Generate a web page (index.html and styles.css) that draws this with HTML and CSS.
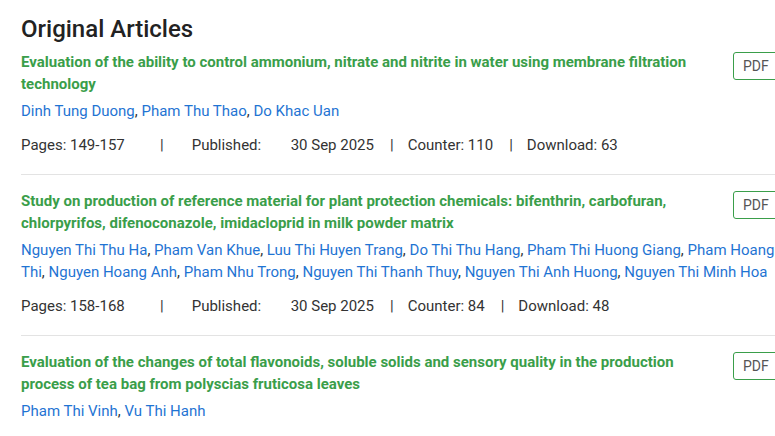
FILE: index.html
```html
<!DOCTYPE html>
<html lang="en">
<head>
<meta charset="utf-8">
<title>Original Articles</title>
<link rel="stylesheet" href="styles.css">
</head>
<body>
<main class="section">
  <h2 class="section-title">Original Articles</h2>

  <article class="article">
    <div class="article-head">
      <a class="article-title" href="#">Evaluation of the ability to control ammonium, nitrate and nitrite in water using membrane filtration technology</a>
      <a class="pdf-btn" href="#">PDF</a>
    </div>
    <div class="authors"><a href="#">Dinh Tung Duong</a>, <a href="#">Pham Thu Thao</a>, <a href="#">Do Khac Uan</a></div>
    <div class="meta">
      <span class="pages">Pages: 149-157</span>
      <span class="sep sep-first">|</span>
      <span class="pub-label">Published:</span>
      <span class="date">30 Sep 2025</span>
      <span class="sep">|</span>
      <span class="counter">Counter: 110</span>
      <span class="sep">|</span>
      <span class="download">Download: 63</span>
    </div>
  </article>

  <article class="article">
    <div class="article-head">
      <a class="article-title" href="#">Study on production of reference material for plant protection chemicals: bifenthrin, carbofuran, chlorpyrifos, difenoconazole, imidacloprid in milk powder matrix</a>
      <a class="pdf-btn" href="#">PDF</a>
    </div>
    <div class="authors"><a href="#">Nguyen Thi Thu Ha</a>, <a href="#">Pham Van Khue</a>, <a href="#">Luu Thi Huyen Trang</a>, <a href="#">Do Thi Thu Hang</a>, <a href="#">Pham Thi Huong Giang</a>, <a href="#">Pham Hoang Thi</a>, <a href="#">Nguyen Hoang Anh</a>, <a href="#">Pham Nhu Trong</a>, <a href="#">Nguyen Thi Thanh Thuy</a>, <a href="#">Nguyen Thi Anh Huong</a>, <a href="#">Nguyen Thi Minh Hoa</a></div>
    <div class="meta">
      <span class="pages">Pages: 158-168</span>
      <span class="sep sep-first">|</span>
      <span class="pub-label">Published:</span>
      <span class="date">30 Sep 2025</span>
      <span class="sep">|</span>
      <span class="counter">Counter: 84</span>
      <span class="sep">|</span>
      <span class="download">Download: 48</span>
    </div>
  </article>

  <article class="article">
    <div class="article-head">
      <a class="article-title" href="#">Evaluation of the changes of total flavonoids, soluble solids and sensory quality in the production process of tea bag from polyscias fruticosa leaves</a>
      <a class="pdf-btn" href="#">PDF</a>
    </div>
    <div class="authors"><a href="#">Pham Thi Vinh</a>, <a href="#">Vu Thi Hanh</a></div>
  </article>
</main>
</body>
</html>
```

FILE: styles.css
```css
html, body {
  margin: 0;
  padding: 0;
  overflow: hidden;
  background: #ffffff;
}

body {
  font-family: Roboto, "Liberation Sans", Arial, sans-serif;
  color: #333333;
}

.section {
  width: 770px;
  padding: 15px 0 0 21px;
}

.section-title {
  margin: 0 0 8px 0;
  font-size: 24px;
  line-height: 28px;
  font-weight: 500;
  color: #222222;
}

.article {
  padding-bottom: 18px;
  margin-bottom: 15px;
  border-bottom: 1px solid #e3e3e3;
}

.article-head {
  display: flex;
  align-items: flex-start;
}

.article-title {
  width: 692px;
  padding-right: 20px;
  font-size: 15px;
  line-height: 22px;
  font-weight: 700;
  color: #3a9e4a;
  text-decoration: none;
}

.pdf-btn {
  display: inline-block;
  margin-top: 1px;
  width: 58px;
  height: 28px;
  box-sizing: border-box;
  padding-left: 9px;
  border: 1px solid #3a9e4a;
  border-radius: 3px;
  font-size: 14px;
  line-height: 26px;
  color: #555555;
  text-decoration: none;
}

.authors {
  margin-top: 5px;
  font-size: 15px;
  line-height: 22px;
  color: #333333;
}

.authors a {
  color: #1f74d3;
  text-decoration: none;
}

.meta {
  display: flex;
  margin-top: 12px;
  font-size: 15px;
  line-height: 22px;
  color: #333333;
}

.pages {
  width: 139px;
}

.sep {
  margin: 0 14px 0 16px;
}

.sep-first {
  margin: 0 28px 0 0;
}

.pub-label {
  width: 99px;
}
```
